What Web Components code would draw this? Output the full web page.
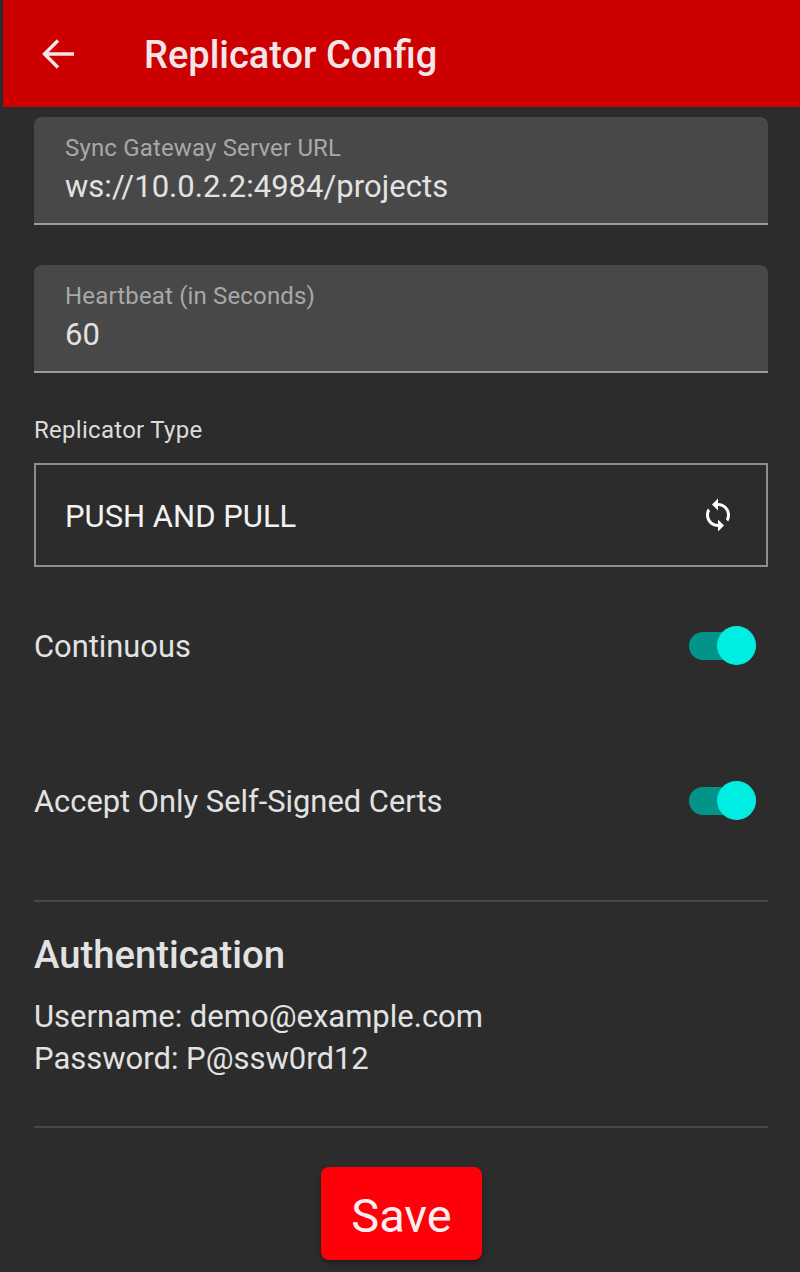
<!DOCTYPE html>
<html lang="en">
<head>
<meta charset="utf-8">
<title>Replicator Config</title>
<style>
  html, body { margin: 0; height: 100%; background: #2c2c2c; }
  body { font-family: Roboto, "Liberation Sans", sans-serif; color: #e6e6e6; overflow: hidden; }
  main { display: block; padding: 10px 32px 0 34px; }
</style>
</head>
<body>
<app-bar>Replicator Config</app-bar>
<main>
  <text-field label="Sync Gateway Server URL" value="ws://10.0.2.2:4984/projects"></text-field>
  <text-field label="Heartbeat (in Seconds)" value="60" style="margin-top:40px"></text-field>
  <type-select label="Replicator Type" value="PUSH AND PULL"></type-select>
  <toggle-row style="margin-top:27px">Continuous</toggle-row>
  <toggle-row style="margin-top:51px">Accept Only Self-Signed Certs</toggle-row>
  <auth-block username="demo@example.com" password="P@ssw0rd12"></auth-block>
  <save-button>Save</save-button>
</main>
<script>
class AppBar extends HTMLElement {
  constructor() {
    super();
    this.attachShadow({ mode: 'open' }).innerHTML = `
      <style>
        :host { display: block; margin-left: 3px; height: 107px; background: #cc0000; color: #f3e6e8; }
        .bar { display: flex; align-items: center; height: 100%; }
        svg { width: 32px; height: 32px; margin-left: 39px; flex: none; }
        .title { margin-left: 70px; padding-top: 3px; font-size: 38px; font-weight: 500; line-height: 1; }
      </style>
      <div class="bar">
        <svg viewBox="0 0 32 32" fill="none" stroke="currentColor" stroke-width="3.4"><path d="M32 16H3M16 2.5 2.5 16 16 29.5"/></svg>
        <div class="title"><slot></slot></div>
      </div>`;
  }
}

class TextField extends HTMLElement {
  constructor() {
    super();
    this.attachShadow({ mode: 'open' }).innerHTML = `
      <style>
        :host { display: block; }
        .box { height: 106px; background: #484848; border-radius: 8px 8px 0 0; border-bottom: 2px solid #9c9c9c; padding-left: 31px; }
        .label { padding-top: 17px; font-size: 24px; line-height: 28px; color: #a8a8a8; letter-spacing: .16px; }
        .value { margin-top: 7px; font-size: 31px; line-height: 36px; color: #e2e2e2; letter-spacing: .04px; }
      </style>
      <div class="box">
        <div class="label"></div>
        <div class="value"></div>
      </div>`;
    this.shadowRoot.querySelector('.label').textContent = this.getAttribute('label');
    this.shadowRoot.querySelector('.value').textContent = this.getAttribute('value');
  }
}

class TypeSelect extends HTMLElement {
  constructor() {
    super();
    this.attachShadow({ mode: 'open' }).innerHTML = `
      <style>
        :host { display: block; }
        .label { margin-top: 43px; font-size: 24px; line-height: 28px; color: #dcdcdc; letter-spacing: .28px; }
        .box { margin-top: 19px; height: 100px; border: 2px solid #8f8f8f; display: flex; align-items: center; justify-content: space-between; padding: 0 30px 0 29px; color: #f2f2f2; font-size: 31px; }
        .value { padding-top: 2px; }
        svg { width: 36px; height: 36px; color: #fff; }
      </style>
      <div class="label"></div>
      <div class="box">
        <span class="value"></span>
        <svg viewBox="0 0 24 24" fill="currentColor"><path d="M12 4V1L8 5l4 4V6c3.31 0 6 2.69 6 6 0 1.01-.25 1.97-.7 2.8l1.46 1.46C19.54 15.03 20 13.57 20 12c0-4.42-3.58-8-8-8zm0 14c-3.31 0-6-2.69-6-6 0-1.01.25-1.97.7-2.8L5.24 7.74C4.46 8.97 4 10.43 4 12c0 4.42 3.58 8 8 8v3l4-4-4-4v3z"/></svg>
      </div>`;
    this.shadowRoot.querySelector('.label').textContent = this.getAttribute('label');
    this.shadowRoot.querySelector('.value').textContent = this.getAttribute('value');
  }
}

class ToggleRow extends HTMLElement {
  constructor() {
    super();
    this.attachShadow({ mode: 'open' }).innerHTML = `
      <style>
        :host { display: block; }
        .row { display: flex; align-items: center; justify-content: space-between; height: 104px; font-size: 30.85px; color: #e2e2e2; }
        .switch { position: relative; width: 67px; height: 28px; margin-right: 12px; background: #029488; border-radius: 14px; }
        .knob { position: absolute; right: 0; top: -6px; width: 39px; height: 39px; border-radius: 50%; background: #00eee2; }
      </style>
      <div class="row">
        <span><slot></slot></span>
        <div class="switch"><div class="knob"></div></div>
      </div>`;
  }
}

class AuthBlock extends HTMLElement {
  constructor() {
    super();
    this.attachShadow({ mode: 'open' }).innerHTML = `
      <style>
        :host { display: block; margin-top: 47px; border-top: 2px solid #484848; border-bottom: 2px solid #484848; height: 224px; }
        h2 { margin: 31px 0 0; font-size: 38.3px; font-weight: 500; line-height: 44px; color: #e2e2e2; }
        p { margin: 19px 0 0; font-size: 31px; line-height: 42px; color: #e2e2e2; }
      </style>
      <h2>Authentication</h2>
      <p><span class="user"></span><br><span class="pass"></span></p>`;
    this.shadowRoot.querySelector('.user').textContent = 'Username: ' + this.getAttribute('username');
    this.shadowRoot.querySelector('.pass').textContent = 'Password: ' + this.getAttribute('password');
  }
}

class SaveButton extends HTMLElement {
  constructor() {
    super();
    this.attachShadow({ mode: 'open' }).innerHTML = `
      <style>
        :host { display: flex; justify-content: center; margin-top: 39px; padding-left: 1px; }
        button { width: 161px; height: 93px; border: 0; border-radius: 8px; background: #ff0009; color: #fbeef0; font: 400 47px Roboto, "Liberation Sans", sans-serif; box-shadow: 0 3px 5px rgba(0,0,0,.35); padding: 4px 0 0; }
      </style>
      <button><slot></slot></button>`;
  }
}

customElements.define('app-bar', AppBar);
customElements.define('text-field', TextField);
customElements.define('type-select', TypeSelect);
customElements.define('toggle-row', ToggleRow);
customElements.define('auth-block', AuthBlock);
customElements.define('save-button', SaveButton);
</script>
</body>
</html>
